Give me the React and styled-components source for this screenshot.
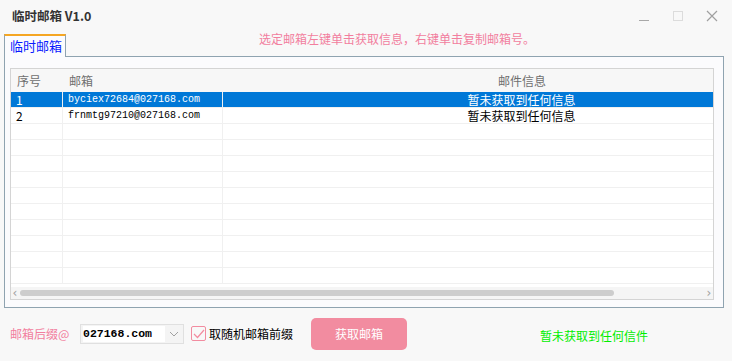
import React from "react";
import styled, { createGlobalStyle } from "styled-components";

const GlobalStyle = createGlobalStyle`
  * { box-sizing: border-box; }
  body {
    margin: 0;
    background: #f8f8f8;
    font-family: "Noto Sans CJK SC", "Liberation Sans", sans-serif;
  }
`;

const rows = [
  { no: "1", mail: "byciex72684@027168.com", info: "暂未获取到任何信息", selected: true },
  { no: "2", mail: "frnmtg97210@027168.com", info: "暂未获取到任何信息" },
];
const emptyRows = 10;

const App = () => {
  return (
    <Window>
      <GlobalStyle />
      <TitleBar>
        <Title>临时邮箱 V1.0</Title>
        <Controls>
          <CtrlBtn>
            <svg width="12" height="12" viewBox="0 0 12 12">
              <line x1="1" y1="10.5" x2="11" y2="10.5" stroke="#a8a8a8" strokeWidth="1" />
            </svg>
          </CtrlBtn>
          <CtrlBtn>
            <svg width="12" height="12" viewBox="0 0 12 12">
              <rect x="1.5" y="1.5" width="9" height="9" fill="none" stroke="#dcdcdc" strokeWidth="1" />
            </svg>
          </CtrlBtn>
          <CtrlBtn>
            <svg width="12" height="12" viewBox="0 0 12 12">
              <path d="M1 1 L11 11 M11 1 L1 11" stroke="#a0a0a0" strokeWidth="1.2" />
            </svg>
          </CtrlBtn>
        </Controls>
      </TitleBar>

      <TabStrip>
        <Tab>临时邮箱</Tab>
        <Hint>选定邮箱左键单击获取信息，右键单击复制邮箱号。</Hint>
      </TabStrip>

      <Panel>
        <ListView>
          <Grid>
            <HeadRow>
              <HeadCell $w={52}>序号</HeadCell>
              <HeadCell $w={160}>邮箱</HeadCell>
              <HeadCell $w={598} $center>邮件信息</HeadCell>
            </HeadRow>
            {rows.map((r) => (
              <Row key={r.no} $selected={r.selected}>
                <Cell $w={52}>{r.no}</Cell>
                <MailCell $w={160}>{r.mail}</MailCell>
                <Cell $w={598} $center>{r.info}</Cell>
              </Row>
            ))}
            {Array.from({ length: emptyRows }).map((_, i) => (
              <Row key={"e" + i}>
                <Cell $w={52} />
                <Cell $w={160} />
                <Cell $w={598} />
              </Row>
            ))}
          </Grid>
          <ScrollBar>
            <Arrow>‹</Arrow>
            <Track>
              <Thumb />
            </Track>
            <Arrow>›</Arrow>
          </ScrollBar>
        </ListView>
      </Panel>

      <Footer>
        <PinkLabel>邮箱后缀@</PinkLabel>
        <Combo>
          <ComboText>027168.com</ComboText>
          <svg width="10" height="6" viewBox="0 0 10 6">
            <path d="M1 1 L5 5 L9 1" fill="none" stroke="#a0a0a0" strokeWidth="1" />
          </svg>
        </Combo>
        <CheckWrap>
          <CheckBox>
            <svg width="12" height="10" viewBox="0 0 12 10">
              <path d="M1 5 L4.5 8.5 L11 1" fill="none" stroke="#f28ca0" strokeWidth="1.2" />
            </svg>
          </CheckBox>
          <CheckLabel>取随机邮箱前缀</CheckLabel>
        </CheckWrap>
        <FetchButton>获取邮箱</FetchButton>
        <Status>暂未获取到任何信件</Status>
      </Footer>
    </Window>
  );
};

export default App;

const Window = styled.div`
  width: 732px;
  height: 361px;
  display: flex;
  flex-direction: column;
  background: #f8f8f8;
  overflow: hidden;
`;

const TitleBar = styled.div`
  height: 34px;
  display: flex;
  align-items: flex-start;
  justify-content: space-between;
  padding: 7px 14px 0 12px;
`;

const Title = styled.div`
  font-size: 12.5px;
  font-weight: bold;
  color: #333;
  line-height: 18px;
`;

const Controls = styled.div`
  display: flex;
  gap: 22px;
  padding-top: 3px;
`;

const CtrlBtn = styled.div`
  width: 12px;
  height: 12px;
  display: flex;
`;

const TabStrip = styled.div`
  display: flex;
  align-items: flex-start;
  height: 22px;
  padding-left: 5px;
`;

const Tab = styled.div`
  width: 62px;
  height: 23px;
  border-top: 2px solid #f5a623;
  border-left: 1px solid #8fa3b0;
  border-right: 1px solid #8fa3b0;
  background: #fbfbfd;
  color: #0a1aff;
  font-size: 13px;
  line-height: 19px;
  padding-left: 5px;
  position: relative;
  z-index: 1;
  margin-left: -1px;
`;

const Hint = styled.div`
  margin-left: 193px;
  margin-top: -3px;
  font-size: 12px;
  line-height: 16px;
  color: #f27e9e;
`;

const Panel = styled.div`
  margin-left: 4px;
  width: 720px;
  height: 252px;
  border: 1px solid #8fa3b0;
  background: #fbfbfd;
  padding: 11px 9px 7px 5px;
`;

const ListView = styled.div`
  height: 100%;
  border: 1px solid #d4d4d4;
  background: #ffffff;
  display: flex;
  flex-direction: column;
  overflow: hidden;
`;

const Grid = styled.div`
  flex: 1;
  overflow: hidden;
`;

const HeadRow = styled.div`
  display: flex;
  height: 23px;
  background: #f7f7f7;
  width: max-content;
  min-width: 100%;
`;

const HeadCell = styled.div`
  width: ${(p) => p.$w}px;
  flex-shrink: 0;
  text-align: ${(p) => (p.$center ? "center" : "left")};
  padding-left: ${(p) => (p.$center ? 0 : 6)}px;
  font-size: 12px;
  line-height: 23px;
  color: #6f6f6f;
`;

const Row = styled.div`
  display: flex;
  width: max-content;
  min-width: 100%;
  height: 16px;
  background: ${(p) => (p.$selected ? "#0078d7" : "#fff")};
  color: ${(p) => (p.$selected ? "#fff" : "#000")};
  border-bottom: 1px solid #f0f0f0;
`;

const Cell = styled.div`
  width: ${(p) => p.$w}px;
  flex-shrink: 0;
  border-right: 1px solid #f0f0f0;
  text-align: ${(p) => (p.$center ? "center" : "left")};
  padding-left: ${(p) => (p.$center ? 0 : 5)}px;
  font-size: 12px;
  line-height: 15px;
  white-space: nowrap;
`;

const MailCell = styled(Cell)`
  font-family: "Liberation Mono", "DejaVu Sans Mono", monospace;
  font-size: 10px;
`;

const ScrollBar = styled.div`
  height: 12px;
  display: flex;
  align-items: center;
  background: #f5f5f5;
  flex-shrink: 0;
`;

const Arrow = styled.div`
  width: 8px;
  font-size: 12px;
  line-height: 12px;
  color: #a0a0a0;
  text-align: center;
  font-family: "DejaVu Sans", sans-serif;
`;

const Track = styled.div`
  flex: 1;
  padding: 0 1px;
`;

const Thumb = styled.div`
  width: 594px;
  height: 6px;
  border-radius: 3px;
  background: #cdcdcd;
`;

const Footer = styled.div`
  flex: 1;
  display: flex;
  align-items: center;
  padding: 0 0 2px 10px;
`;

const PinkLabel = styled.div`
  font-size: 12px;
  color: #f27e9e;
  width: 70px;
`;

const Combo = styled.div`
  width: 104px;
  height: 20px;
  border: 1px solid #e0e0e0;
  background: #f4f4f4;
  display: flex;
  align-items: center;
  justify-content: space-between;
  padding: 0 4px 0 2px;
`;

const ComboText = styled.div`
  background: #fff;
  width: 82px;
  height: 16px;
  font-family: "Liberation Mono", "DejaVu Sans Mono", monospace;
  font-weight: bold;
  font-size: 11.5px;
  line-height: 16px;
  color: #000;
`;

const CheckWrap = styled.div`
  display: flex;
  align-items: center;
  margin-left: 7px;
  gap: 3px;
`;

const CheckBox = styled.div`
  width: 15px;
  height: 15px;
  border: 1px solid #f28ca0;
  border-radius: 2px;
  display: flex;
  align-items: center;
  justify-content: center;
`;

const CheckLabel = styled.div`
  font-size: 12px;
  color: #000;
`;

const FetchButton = styled.button`
  margin-left: 18px;
  width: 96px;
  height: 32px;
  border: none;
  border-radius: 5px;
  background: #f28ca0;
  color: #fff;
  font-family: "Noto Sans CJK SC", sans-serif;
  font-size: 12px;
`;

const Status = styled.div`
  margin-left: 133px;
  margin-top: 4px;
  font-size: 12px;
  color: #00ee00;
`;
